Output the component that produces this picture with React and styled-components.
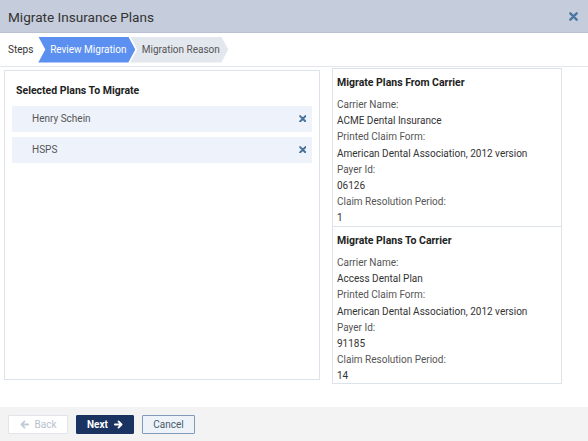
import styled, { createGlobalStyle } from "styled-components";

const GlobalStyle = createGlobalStyle`
  html, body {
    margin: 0;
    padding: 0;
    background: #ffffff;
  }
  body {
    font-family: Roboto, "Liberation Sans", sans-serif;
    font-size: 10px;
    color: #333;
  }
`;

const fromCarrier = [
  ["Carrier Name:", "ACME Dental Insurance"],
  ["Printed Claim Form:", "American Dental Association, 2012 version"],
  ["Payer Id:", "06126"],
  ["Claim Resolution Period:", "1"],
];

const toCarrier = [
  ["Carrier Name:", "Access Dental Plan"],
  ["Printed Claim Form:", "American Dental Association, 2012 version"],
  ["Payer Id:", "91185"],
  ["Claim Resolution Period:", "14"],
];

const plans = ["Henry Schein", "HSPS"];

function Cross({ size = 8, color = "#3e6d93" }) {
  return (
    <svg width={size} height={size} viewBox="0 0 10 10">
      <path
        d="M1.5 1.5 L8.5 8.5 M8.5 1.5 L1.5 8.5"
        stroke={color}
        strokeWidth="2.6"
        strokeLinecap="round"
      />
    </svg>
  );
}

function Arrow({ left, color }) {
  return (
    <svg
      width="9"
      height="9"
      viewBox="0 0 10 10"
      style={{ transform: left ? "scaleX(-1)" : "none" }}
    >
      <path
        d="M1 5 H8 M5 1.6 L8.4 5 L5 8.4"
        stroke={color}
        strokeWidth="2"
        fill="none"
        strokeLinecap="round"
        strokeLinejoin="round"
      />
    </svg>
  );
}

export default function App() {
  return (
    <>
      <GlobalStyle />
      <Modal>
        <Header>
          <Title>Migrate Insurance Plans</Title>
          <CloseButton>
            <Cross size={9} color="#4a76a0" />
          </CloseButton>
        </Header>

        <StepsBar>
          <StepsLabel>Steps</StepsLabel>
          <Step active>Review Migration</Step>
          <Step>Migration Reason</Step>
        </StepsBar>

        <Body>
          <PlansPanel>
            <PanelTitle>Selected Plans To Migrate</PanelTitle>
            <PlanList>
              {plans.map((plan) => (
                <PlanRow key={plan}>
                  <span>{plan}</span>
                  <Cross size={7.5} color="#46729a" />
                </PlanRow>
              ))}
            </PlanList>
          </PlansPanel>

          <CarrierColumn>
            <CarrierBox>
              <BoxTitle>Migrate Plans From Carrier</BoxTitle>
              {fromCarrier.map(([label, value]) => (
                <Field key={label}>
                  <FieldLabel>{label}</FieldLabel>
                  <FieldValue>{value}</FieldValue>
                </Field>
              ))}
            </CarrierBox>
            <CarrierBox last>
              <BoxTitle>Migrate Plans To Carrier</BoxTitle>
              {toCarrier.map(([label, value]) => (
                <Field key={label}>
                  <FieldLabel>{label}</FieldLabel>
                  <FieldValue>{value}</FieldValue>
                </Field>
              ))}
            </CarrierBox>
          </CarrierColumn>
        </Body>

        <Footer>
          <Button variant="disabled">
            <Arrow left color="#c3ccd6" />
            Back
          </Button>
          <Button variant="primary">
            Next
            <Arrow color="#ffffff" />
          </Button>
          <Button variant="secondary">Cancel</Button>
        </Footer>
      </Modal>
    </>
  );
}

const Modal = styled.div`
  width: 588px;
  height: 441px;
  display: flex;
  flex-direction: column;
  background: #fff;
`;

const Header = styled.div`
  height: 33px;
  flex-shrink: 0;
  background: #c5ccdb;
  border-bottom: 1px solid #b9c1d1;
  box-sizing: border-box;
  display: flex;
  align-items: center;
  justify-content: space-between;
  padding: 0 10px 0 8px;
`;

const Title = styled.div`
  font-size: 13.6px;
  color: #333;
  padding-top: 1px;
`;

const CloseButton = styled.div`
  display: flex;
  align-items: center;
`;

const StepsBar = styled.div`
  height: 34px;
  flex-shrink: 0;
  display: flex;
  align-items: center;
  padding-left: 8px;
  border-bottom: 1px solid #e3e7ed;
  box-sizing: border-box;
`;

const StepsLabel = styled.div`
  color: #333;
  margin-right: 5px;
`;

const Step = styled.div`
  height: 26px;
  width: 97px;
  display: flex;
  align-items: center;
  justify-content: center;
  padding-left: 3px;
  box-sizing: border-box;
  background: ${(p) => (p.active ? "#5b8ff0" : "#e3e7ee")};
  color: ${(p) => (p.active ? "#ffffff" : "#555")};
  clip-path: polygon(
    0 0,
    calc(100% - 7px) 0,
    100% 50%,
    calc(100% - 7px) 100%,
    0 100%,
    7px 50%
  );
  & + & {
    margin-left: -5px;
    width: 98px;
  }
`;

const Body = styled.div`
  flex: 1;
  display: flex;
  align-items: flex-start;
  gap: 12px;
  padding: 1px 4px 0;
`;

const PlansPanel = styled.div`
  width: 316px;
  height: 310px;
  margin-top: 2px;
  box-sizing: border-box;
  border: 1px solid #dde3ea;
  padding: 12px 7px;
`;

const PanelTitle = styled.div`
  font-weight: bold;
  font-size: 10.5px;
  color: #222;
  line-height: 16px;
  padding-left: 4px;
  margin-bottom: 7px;
`;

const PlanList = styled.div`
  display: flex;
  flex-direction: column;
  gap: 5px;
`;

const PlanRow = styled.div`
  height: 25px;
  background: #eef2fa;
  display: flex;
  align-items: center;
  justify-content: space-between;
  padding: 0 6px 1px 20px;
  color: #555;
`;

const CarrierColumn = styled.div`
  width: 230px;
  display: flex;
  flex-direction: column;
`;

const CarrierBox = styled.div`
  border: 1px solid #dde3ea;
  border-top: ${(p) => (p.last ? "none" : "1px solid #dde3ea")};
  height: ${(p) => (p.last ? "157px" : "159px")};
  box-sizing: border-box;
  padding: 6px 4px 0;
`;

const BoxTitle = styled.div`
  font-weight: bold;
  font-size: 10.5px;
  color: #222;
  line-height: 16px;
  margin-bottom: 6px;
`;

const Field = styled.div`
  display: flex;
  flex-direction: column;
`;

const FieldLabel = styled.div`
  line-height: 16.3px;
  color: #555;
`;

const FieldValue = styled.div`
  line-height: 16px;
  color: #333;
`;

const Footer = styled.div`
  height: 34px;
  flex-shrink: 0;
  background: #f3f3f3;
  display: flex;
  align-items: center;
  gap: 8px;
  padding: 0 8px;
`;

const buttonColors = {
  disabled: { bg: "#ffffff", border: "#e1e5ea", color: "#b8c1cc", width: "60px" },
  primary: { bg: "#1b3361", border: "#1b3361", color: "#ffffff", width: "58px" },
  secondary: { bg: "#eef3fa", border: "#7e9cb8", color: "#4a5a6a", width: "53px" },
};

const Button = styled.div`
  height: 19px;
  width: ${(p) => buttonColors[p.variant].width};
  box-sizing: border-box;
  display: flex;
  align-items: center;
  justify-content: center;
  gap: 6px;
  background: ${(p) => buttonColors[p.variant].bg};
  border: 1px solid ${(p) => buttonColors[p.variant].border};
  color: ${(p) => buttonColors[p.variant].color};
  font-weight: ${(p) => (p.variant === "primary" ? "bold" : "normal")};
  border-radius: 1px;
`;
